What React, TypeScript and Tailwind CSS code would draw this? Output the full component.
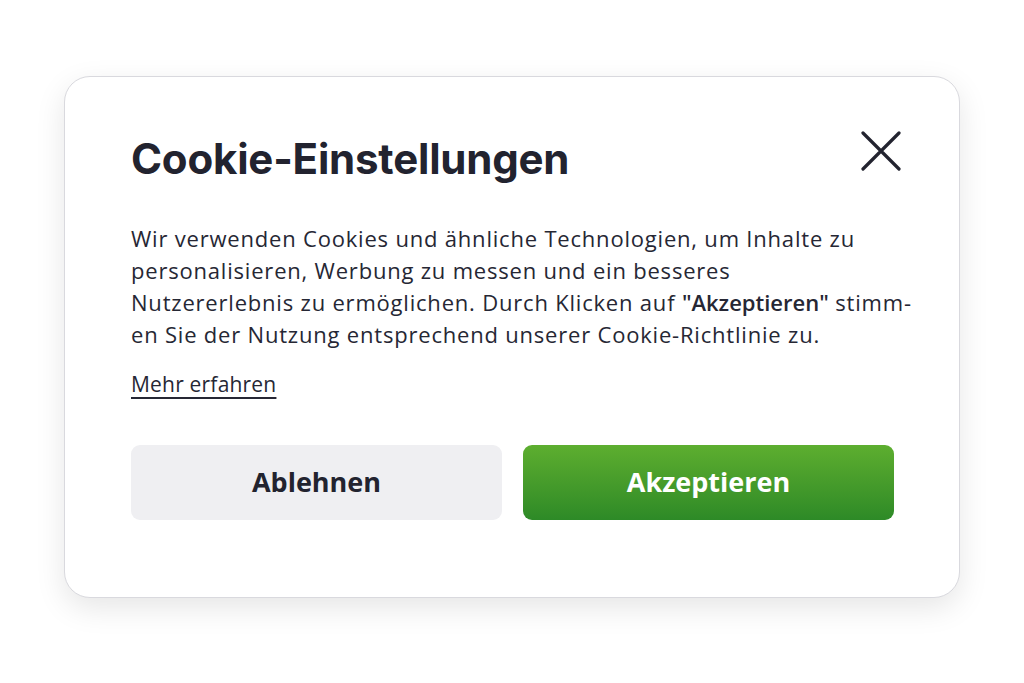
export default function App() {
  return (
    <div className="min-h-screen bg-white pt-[76px]" style={{ fontFamily: "'Open Sans', 'Noto Sans', sans-serif" }}>
      <div className="mx-auto w-[896px] h-[522px] rounded-[26px] border border-[#d9d9de] bg-white shadow-[0_10px_30px_rgba(0,0,0,0.10)] pl-[66px] pr-[56px] pt-[52px]">
        <div className="flex items-start justify-between">
          <h1
            className="text-[42px] leading-[56px] font-bold tracking-[-0.2px] text-[#22232f] mt-[2px]"
            style={{ fontFamily: "Inter, 'Noto Sans', sans-serif" }}
          >
            Cookie-Einstellungen
          </h1>
          <button className="w-[40px] h-[40px] mt-[2px] mr-[2px] text-[#22232f]">
            <svg viewBox="0 0 40 40" className="w-[40px] h-[40px]" fill="none" stroke="currentColor" strokeWidth="3.2" strokeLinecap="round">
              <path d="M2 2 L38 38 M38 2 L2 38" />
            </svg>
          </button>
        </div>
        <p className="mt-[35px] text-[22px] leading-[32px] text-[#262734] tracking-[0.8px] whitespace-nowrap">
          Wir verwenden Cookies und ähnliche Technologien, um Inhalte zu
          <br />
          personalisieren, Werbung zu messen und ein besseres
          <br />
          Nutzererlebnis zu ermöglichen. Durch Klicken auf{" "}
          <strong className="font-semibold tracking-normal">"Akzeptieren"</strong> stimm-
          <br />
          en Sie der Nutzung entsprechend unserer Cookie-Richtlinie zu.
        </p>
        <a href="#" className="inline-block mt-[20px] text-[21px] leading-[28px] text-[#262734] tracking-[0.2px] underline underline-offset-[5px] decoration-[1.5px]">
          Mehr erfahren
        </a>
        <div className="mt-[47px] flex gap-[21px] w-[763px]">
          <button className="flex-1 h-[75px] rounded-[9px] bg-[#efeff2] text-[27px] font-bold text-[#22232f]">
            Ablehnen
          </button>
          <button className="flex-1 h-[75px] rounded-[9px] bg-gradient-to-b from-[#5dae2f] to-[#2d8a27] text-[27px] font-bold text-white">
            Akzeptieren
          </button>
        </div>
      </div>
    </div>
  );
}
